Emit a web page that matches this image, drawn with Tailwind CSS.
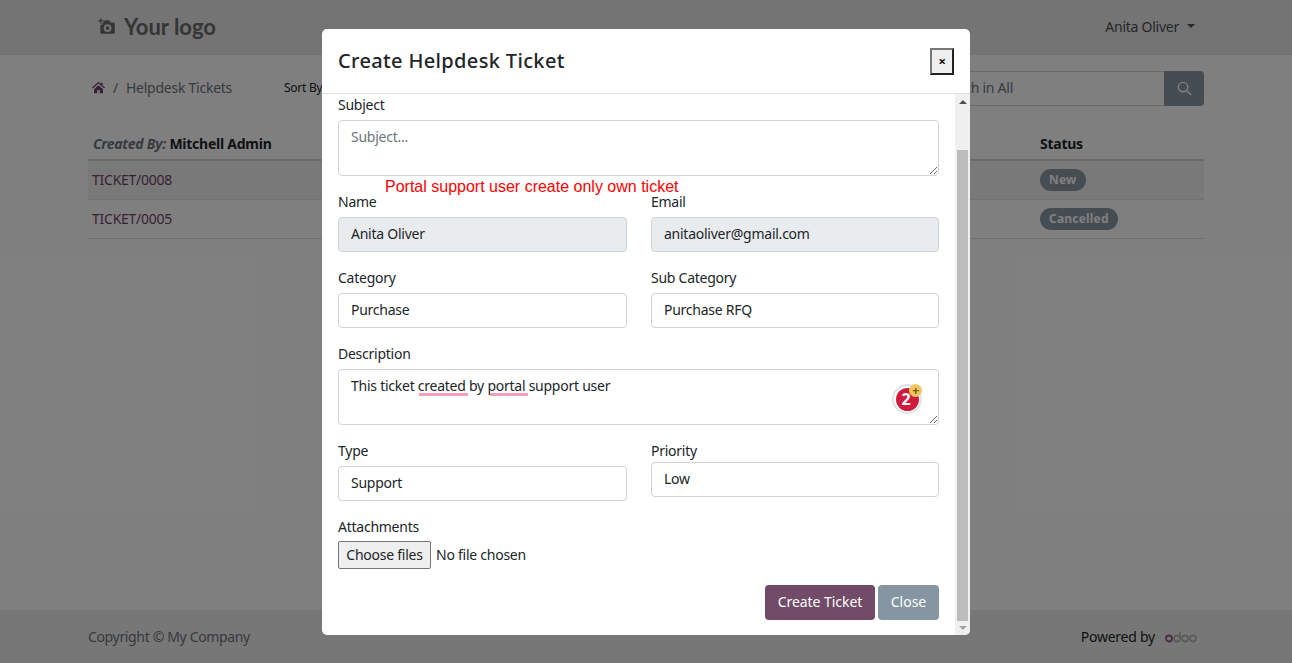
<!DOCTYPE html>
<html lang="en">
<head>
<meta charset="utf-8">
<title>Create Helpdesk Ticket</title>
<script src="https://cdn.jsdelivr.net/npm/@tailwindcss/browser@4"></script>
</head>
<body class="relative h-[663px] overflow-hidden bg-white font-['Noto_Sans',sans-serif] text-[14px] tracking-[-0.25px] text-[#212529]">

    <!-- page behind the modal -->
    <div class="flex h-[663px] flex-col">
        <header class="h-[55px] bg-[#e8e8e8]">
            <div class="mx-auto flex h-full w-[1116px] items-center justify-between pb-[1px] pl-[9px] pr-[9px]">
                <div class="flex items-center gap-[7px] text-[#6b6b6b]">
                    <svg class="h-[20px] w-[20px]" viewBox="0 0 18 18" fill="currentColor"><path d="M3 1h1v2h2v1H4v2H3V4H1V3h2z"/><path fill-rule="evenodd" d="M7 3h4l1 2h3a1 1 0 0 1 1 1v8a1 1 0 0 1-1 1H4a1 1 0 0 1-1-1V7h2V5h1zm2.500 3.500a3.500 3.500 0 1 0 0 7 3.500 3.500 0 0 0 0-7zm0 1.800a1.700 1.700 0 1 1 0 3.400 1.700 1.700 0 0 1 0-3.400z"/></svg>
                    <span class="font-['Lato',sans-serif] text-[22px] font-bold leading-none tracking-normal">Your logo</span>
                </div>
                <div class="flex items-center gap-[8px] pb-[2px] text-[#495057]">
                    <span>Anita Oliver</span>
                    <span class="h-0 w-0 border-x-[4px] border-t-[4px] border-x-transparent border-t-[#495057]"></span>
                </div>
            </div>
        </header>

        <main class="mx-auto w-[1116px] flex-1">
            <div class="mt-[16px] flex h-[35px] items-center">
                <div class="flex w-[196px] items-center pb-[2px] pl-[4px] text-[#6c757d]">
                    <svg class="mr-[8px] h-[13px] w-[13px] text-[#71416a]" viewBox="0 0 16 14" fill="currentColor"><path d="M8 0 0 7l1 1.200L8 2.200l7 6L16 7l-3-2.600V1h-2v1.700zM2.500 9v5H6.500v-4h3v4h4V9L8 4.200z"/></svg>
                    <span class="mr-[8px]">/</span>
                    <span>Helpdesk Tickets</span>
                </div>
                <span class="pb-[2px] text-[12px] text-[#212529]">Sort By</span>
                <div class="ml-auto flex h-[35px] w-[400px]">
                    <div class="flex flex-1 items-center justify-end border-y border-[#ced4da] pb-[2px] pr-[151px] text-[#6c757d]">Search in All</div>
                    <button class="flex w-[40px] items-center justify-center rounded-r-[4px] bg-[#8b9aa7]">
                        <svg class="h-[15px] w-[15px] text-white" viewBox="0 0 16 16" fill="none" stroke="currentColor" stroke-width="1.500"><circle cx="6.500" cy="6.500" r="5"/><path d="m10.500 10.500 4.500 4.500"/></svg>
                    </button>
                </div>
            </div>

            <table class="mt-[21px] w-full border-collapse">
                <thead>
                    <tr class="h-[33px] border-b-2 border-[#d5d5d5] font-bold">
                        <th class="pl-[5px] text-left font-bold"><em class="text-[#6c757d]">Created By:</em> <span class="text-[#212529]">Mitchell Admin</span></th>
                        <th class="w-[164px] text-left font-bold">Status</th>
                    </tr>
                </thead>
                <tbody>
                    <tr class="h-[39px] border-b border-[#dee2e6] bg-[#f2f2f2]">
                        <td class="pl-[4px] text-[#71416a]">TICKET/0008</td>
                        <td><span class="inline-block rounded-full bg-[#8b9aa7] px-[9px] text-[12px] leading-[22px] font-bold tracking-[0.2px] text-white">New</span></td>
                    </tr>
                    <tr class="h-[39px] border-b border-[#dee2e6]">
                        <td class="pl-[4px] text-[#71416a]">TICKET/0005</td>
                        <td><span class="inline-block rounded-full bg-[#8b9aa7] px-[9px] text-[12px] leading-[22px] font-bold tracking-[0.2px] text-white">Cancelled</span></td>
                    </tr>
                </tbody>
            </table>
        </main>

        <footer class="h-[53px] bg-[#efefef]">
            <div class="mx-auto flex h-full w-[1116px] items-center justify-between pr-[7px]">
                <span class="tracking-[-0.35px] text-[#6c757d]">Copyright © My Company</span>
                <div class="flex items-center gap-[10px]">
                    <span>Powered by</span>
                    <svg class="h-[14px] w-[32px]" viewBox="0 0 32 14" fill="none" stroke-width="1.800"><circle cx="4" cy="8.500" r="3" stroke="#9a5a90"/><circle cx="12" cy="8.500" r="3" stroke="#b8b8b8"/><path d="M15 2v7" stroke="#b8b8b8"/><circle cx="20" cy="8.500" r="3" stroke="#b8b8b8"/><circle cx="28" cy="8.500" r="3" stroke="#b8b8b8"/></svg>
                </div>
            </div>
        </footer>
    </div>

    <!-- backdrop -->
    <div class="absolute inset-0 bg-black/50"></div>

    <!-- modal -->
    <div class="absolute left-[322px] top-[29px] flex h-[606px] w-[648px] flex-col overflow-hidden rounded-[5px] bg-white">
        <div class="flex h-[65px] shrink-0 items-center justify-between border-b border-[#dee2e6] pl-[16px] pr-[16px]">
            <h5 class="text-[20px] font-medium tracking-[0.35px]">Create Helpdesk Ticket</h5>
            <button class="flex h-[27px] w-[24px] items-center justify-center border-2 border-[#767676] bg-[#efefef] text-[13px] font-bold leading-none text-black [border-style:outset]">×</button>
        </div>

        <div class="flex min-h-0 flex-1">
            <form class="min-w-0 flex-1 pl-[16px] pr-[16px]">
                <label class="block h-[26px] leading-[22px]">Subject</label>
                <textarea class="block h-[56px] w-full rounded-[4px] border border-[#ced4da] px-[12px] py-[5px] placeholder:text-[#6c757d]" placeholder="Subject..."></textarea>

                <p class="h-[14px] pl-[47px] font-['Liberation_Sans',sans-serif] text-[16px] leading-[22px] tracking-normal text-[#ff0000]">Portal support user create only own ticket</p>

                <div class="grid grid-cols-[289px_288px] gap-x-[24px]">
                    <div>
                        <label class="block h-[27px] leading-[24px]">Name</label>
                        <input class="block h-[35px] w-full rounded-[4px] border border-[#ced4da] bg-[#e9ecef] px-[12px] pb-[2px]" value="Anita Oliver" readonly>
                    </div>
                    <div>
                        <label class="block h-[27px] leading-[24px]">Email</label>
                        <input class="block h-[35px] w-full rounded-[4px] border border-[#ced4da] bg-[#e9ecef] px-[12px] pb-[2px]" value="anitaoliver@gmail.com" readonly>
                    </div>
                    <div class="mt-[14px]">
                        <label class="block h-[27px] leading-[24px]">Category</label>
                        <input class="block h-[35px] w-full rounded-[4px] border border-[#ced4da] px-[12px] pb-[2px]" value="Purchase">
                    </div>
                    <div class="mt-[14px]">
                        <label class="block h-[27px] leading-[24px]">Sub Category</label>
                        <input class="block h-[35px] w-full rounded-[4px] border border-[#ced4da] px-[12px] pb-[2px]" value="Purchase RFQ">
                    </div>
                </div>

                <div class="relative mt-[14px]">
                    <label class="block h-[27px] leading-[24px]">Description</label>
                    <textarea class="block h-[56px] w-full rounded-[4px] border border-[#ced4da] px-[12px] py-[5px]" spellcheck="false">This ticket created by portal support user</textarea>
                    <!-- spell check underlines and the badge sit over the textarea -->
                    <span class="absolute left-[81px] top-[51px] h-[3px] w-[49px] bg-[#f0a0b8]"></span>
                    <span class="absolute left-[152px] top-[51px] h-[3px] w-[38px] bg-[#f0a0b8]"></span>
                    <div class="absolute left-[554px] top-[42px] flex h-[30px] w-[30px] items-center justify-center rounded-full border-2 border-[#dfe3ea] bg-white">
                        <span class="flex h-[23px] w-[23px] items-center justify-center rounded-full bg-[#d01c3c] pr-[2px] text-[16px] font-bold leading-none text-white">2</span>
                    </div>
                    <span class="absolute left-[571px] top-[42px] flex h-[13px] w-[13px] items-center justify-center rounded-full bg-[#f2c661] text-[13px] font-bold leading-none text-[#7a5a10]">+</span>
                </div>

                <div class="grid grid-cols-[289px_288px] gap-x-[24px]">
                    <div class="mt-[14px]">
                        <label class="block h-[27px] leading-[24px]">Type</label>
                        <input class="block h-[35px] w-full rounded-[4px] border border-[#ced4da] px-[12px] pb-[2px]" value="Support">
                    </div>
                    <div class="mt-[14px]">
                        <label class="block h-[23px] leading-[24px]">Priority</label>
                        <input class="block h-[35px] w-full rounded-[4px] border border-[#ced4da] px-[12px] pb-[2px]" value="Low">
                    </div>
                </div>

                <label class="mt-[14px] block h-[26px] leading-[24px]">Attachments</label>
                <div class="flex h-[28px] items-center gap-[5px]">
                    <button type="button" class="h-[28px] w-[93px] rounded-[2px] border border-[#767676] bg-[#efefef] pb-[1px]">Choose files</button>
                    <span class="pb-[1px]">No file chosen</span>
                </div>

                <div class="mt-[16px] flex justify-end gap-[3px]">
                    <button type="button" class="h-[35px] w-[110px] rounded-[4px] bg-[#714b67] pb-[2px] tracking-[-0.05px] text-white">Create Ticket</button>
                    <button type="button" class="h-[35px] w-[61px] rounded-[4px] bg-[#8595a2] pb-[2px] tracking-normal text-white">Close</button>
                </div>
            </form>

            <!-- scrollbar -->
            <div class="flex w-[15px] shrink-0 flex-col items-center bg-[#f0f0f0]">
                <div class="flex h-[16px] w-full items-center justify-center">
                    <span class="h-0 w-0 border-x-[4px] border-b-[4px] border-x-transparent border-b-[#505050]"></span>
                </div>
                <div class="mt-[40px] h-[471px] w-[11px] bg-[#bdbdbd]"></div>
                <div class="flex w-full flex-1 items-center justify-center">
                    <span class="h-0 w-0 border-x-[4px] border-t-[4px] border-x-transparent border-t-[#a3a3a3]"></span>
                </div>
            </div>
        </div>
    </div>
</body>
</html>
